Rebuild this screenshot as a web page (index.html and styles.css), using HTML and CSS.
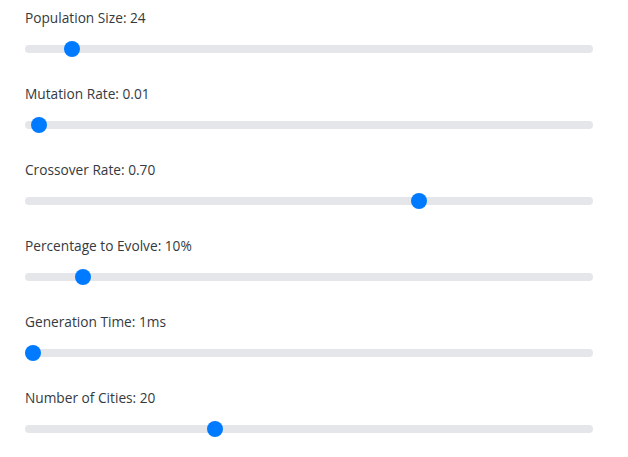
FILE: index.html
```html
<!DOCTYPE html>
<html>
<head>
<meta charset="utf-8">
<link rel="stylesheet" href="styles.css">
</head>
<body>
<div class="controls">
  <div class="row">
    <label class="label">Population Size: 24</label>
    <input class="slider" type="range" min="10" max="210" value="24">
  </div>
  <div class="row">
    <label class="label">Mutation Rate: 0.01</label>
    <input class="slider" type="range" min="0" max="1" step="0.01" value="0.01">
  </div>
  <div class="row">
    <label class="label">Crossover Rate: 0.70</label>
    <input class="slider" type="range" min="0" max="1" step="0.01" value="0.7">
  </div>
  <div class="row">
    <label class="label">Percentage to Evolve: 10%</label>
    <input class="slider" type="range" min="1" max="100" value="10">
  </div>
  <div class="row">
    <label class="label">Generation Time: 1ms</label>
    <input class="slider" type="range" min="1" max="1000" value="1">
  </div>
  <div class="row">
    <label class="label">Number of Cities: 20</label>
    <input class="slider" type="range" min="0" max="60.5" step="any" value="20">
  </div>
</div>
</body>
</html>
```
FILE: styles.css
```css
html, body {
  margin: 0;
  padding: 0;
  background: #ffffff;
}
.controls {
  width: 568px;
  margin-left: 25px;
  padding-top: 8px;
  font-family: "Open Sans", "Noto Sans", sans-serif;
}
.row {
  display: flex;
  flex-direction: column;
  margin-bottom: 27px;
}
.label {
  display: block;
  font-size: 13.7px;
  line-height: 19px;
  font-weight: 500;
  color: #343a40;
  margin-bottom: 14px;
}
.slider {
  -webkit-appearance: none;
  appearance: none;
  width: 100%;
  height: 16px;
  margin: 0;
  padding: 0;
  background: transparent;
}
.slider:focus { outline: none; }
.slider::-webkit-slider-runnable-track {
  height: 8px;
  border-radius: 4px;
  background: #e5e6ea;
}
.slider::-webkit-slider-thumb {
  -webkit-appearance: none;
  appearance: none;
  width: 16px;
  height: 16px;
  margin-top: -4px;
  border: none;
  border-radius: 50%;
  background: #007bff;
}
```
